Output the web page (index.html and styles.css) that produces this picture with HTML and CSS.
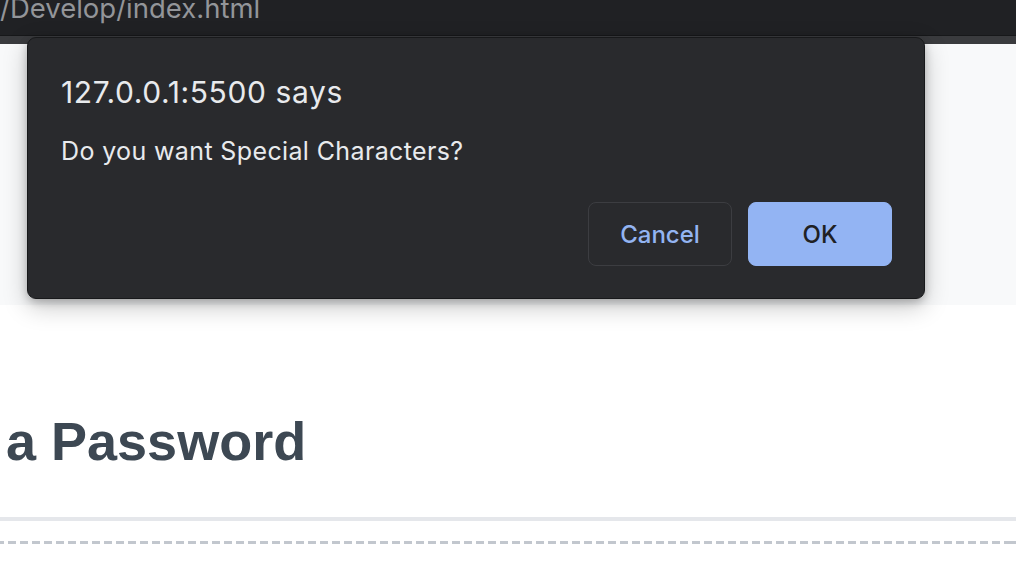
FILE: index.html
```html
<!DOCTYPE html>
<html lang="en">
<head>
<meta charset="utf-8">
<title>Generate a Password</title>
<link rel="stylesheet" href="styles.css">
</head>
<body>
  <div class="chrome">
    <div class="urlbar"><span class="url">/Develop/index.html</span></div>
    <div class="tabstrip"></div>
  </div>
  <main class="page">
    <header class="page-header"></header>
    <section class="content">
      <h1 class="title">a Password</h1>
      <hr class="rule">
      <div class="dashed"></div>
    </section>
  </main>

  <div class="dialog" role="alertdialog">
    <div class="dialog-title">127.0.0.1:5500 says</div>
    <div class="dialog-message">Do you want Special Characters?</div>
    <div class="dialog-actions">
      <button class="btn btn-cancel">Cancel</button>
      <button class="btn btn-ok">OK</button>
    </div>
  </div>
</body>
</html>
```
FILE: styles.css
```css
* { box-sizing: border-box; }
html, body { margin: 0; padding: 0; }
body {
  width: 1016px;
  height: 582px;
  overflow: hidden;
  background: #ffffff;
  font-family: Inter, "Noto Sans", sans-serif;
  position: relative;
}
.chrome { background: #202124; }
.urlbar {
  height: 36px;
  overflow: hidden;
  border-bottom: 1px solid #17181a;
}
.url {
  display: block;
  margin-top: -5px;
  font-size: 27.5px;
  line-height: 1;
  color: #939599;
}
.tabstrip {
  height: 8px;
  background: #3a3b3e;
}
.page { display: flex; flex-direction: column; }
.page-header {
  height: 261px;
  background: #f8f9fa;
}
.content {
  padding-top: 104px;
}
.title {
  margin: 0 0 0 6px;
  font-family: "Liberation Sans", Arial, sans-serif;
  font-weight: 700;
  font-size: 54px;
  line-height: 1.2;
  color: #3d4853;
  letter-spacing: 0;
}
.rule {
  margin: 43px 0 0 0;
  border: 0;
  height: 4px;
  background: #e5e7eb;
}
.dashed {
  margin-top: 20px;
  height: 3px;
  background: repeating-linear-gradient(90deg, #c2c7ce 0 8px, transparent 8px 12px);
  background-position: -4px 0;
}
.dialog {
  position: absolute;
  left: 27px;
  top: 37px;
  width: 898px;
  height: 262px;
  background: #292a2d;
  border: 1px solid #18191b;
  border-radius: 9px;
  box-shadow: 0 8px 24px rgba(0, 0, 0, 0.22), 0 3px 8px rgba(0, 0, 0, 0.22);
  padding: 36px 32px 32px 33px;
  display: flex;
  flex-direction: column;
  color: #e8eaed;
}
.dialog-title {
  font-size: 30px;
  line-height: 36px;
  letter-spacing: 0.6px;
  color: #e8eaed;
}
.dialog-message {
  margin-top: 26px;
  font-size: 25px;
  line-height: 30px;
  letter-spacing: 0.37px;
  color: #e8eaed;
}
.dialog-actions {
  margin-top: auto;
  display: flex;
  justify-content: flex-end;
  gap: 16px;
}
.btn {
  width: 144px;
  height: 64px;
  border-radius: 8px;
  font-family: Inter, "Noto Sans", sans-serif;
  font-size: 24px;
  font-weight: 500;
  cursor: pointer;
}
.btn-cancel {
  background: transparent;
  border: 1px solid #3c3d41;
  color: #93b4f2;
}
.btn-ok {
  background: #93b4f3;
  border: 1px solid #93b4f3;
  color: #202124;
}
```
